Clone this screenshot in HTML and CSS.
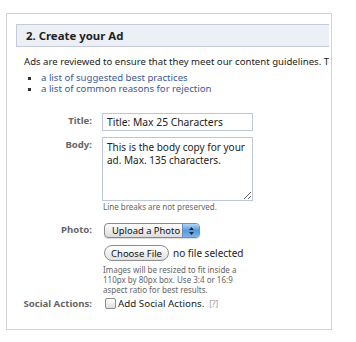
FILE: index.html
```
<!DOCTYPE html>
<html>
 <head>
	 <title>Create your Ad</title>
	 <meta charset="UTF-8"/>
	 <link rel="stylesheet" href="styles.css">
 </head>
 <body>
	<div id="panel">
	<div class="inner">
	<h2 class="step">2. Create your Ad</h2>
	<p class="intro">Ads are reviewed to ensure that they meet our content guidelines. To view examples:</p>
	<ul class="links">
		<li><a href="#">a list of suggested best practices</a></li>
		<li><a href="#">a list of common reasons for rejection</a></li>
	</ul>

	<div class="form">
		<label class="lbl">Title:</label>
		<div class="field"><input class="title" type="text" value="Title: Max 25 Characters"></div>

		<label class="lbl">Body:</label>
		<div class="field">
			<textarea class="body">This is the body copy for your ad. Max. 135 characters.</textarea>
			<div class="note">Line breaks are not preserved.</div>
		</div>

		<label class="lbl photo-lbl">Photo:</label>
		<div class="field photo">
			<div class="select"><span class="sel-text">Upload a Photo</span><span class="sel-arrows"><svg width="7" height="10" viewBox="0 0 7 10"><path d="M3.5 1 L6 4 H1 Z M3.5 9 L6 6 H1 Z" fill="#1d2a3a"/></svg></span></div>
			<div class="file"><button class="choose">Choose File</button><span class="nofile">no file selected</span></div>
			<div class="note help">Images will be resized to fit inside a<br>110px by 80px box. Use 3:4 or 16:9<br>aspect ratio for best results.</div>
		</div>

		<label class="lbl social-lbl">Social Actions:</label>
		<div class="field social"><span class="check"></span><span class="social-text">Add Social Actions.</span><span class="q">[?]</span></div>
	</div>
	</div>
	</div>
 </body>
</html>
```
FILE: styles.css
```
body{
  margin: 0;
  background: #fff;
  font-family: "Noto Sans", "DejaVu Sans", sans-serif;
  color: #333;
}
#panel{
  margin: 13px 0 0 6px;
  border: 1px solid #d3d3d3;
  padding: 10px 2px 0 9px;
  box-sizing: border-box;
  width: 326px;
  height: 317px;
}
.inner{
  overflow: hidden;
  height: 100%;
}
h2.step{
  margin: 0;
  width: 400px;
  height: 23px;
  box-sizing: border-box;
  background: #eceff6;
  border: 1px solid #c5cbdb;
  font-size: 11.4px;
  line-height: 21px;
  padding-left: 9px;
  color: #222;
}
.intro{
  margin: 8px 0 0 8px;
  font-size: 9.6px;
  line-height: 13px;
  white-space: nowrap;
  color: #222;
}
ul.links{
  margin: 4px 0 0 0;
  padding: 0 0 0 25px;
  list-style: square;
  font-size: 9.6px;
  line-height: 11px;
  color: #333;
}
ul.links a{
  color: #3b5998;
  text-decoration: none;
}
.form{
  display: grid;
  grid-template-columns: 76px 1fr;
  column-gap: 10px;
  margin-top: 19px;
}
.lbl{
  text-align: right;
  white-space: nowrap;
  font-size: 9.6px;
  font-weight: bold;
  color: #666;
  line-height: 13px;
  padding-top: 1px;
}
.field{
  margin-bottom: 6px;
}
input.title{
  display: block;
  width: 151px;
  height: 18px;
  box-sizing: border-box;
  border: 1px solid #bdc7d8;
  padding: 0 4px;
  font: 10.3px "Noto Sans", sans-serif;
  color: #222;
}
textarea.body{
  display: block;
  width: 151px;
  height: 64px;
  box-sizing: border-box;
  border: 1px solid #bdc7d8;
  padding: 3px 2px 3px 4px;
  font: 10px/13px "Noto Sans", sans-serif;
  color: #222;
  resize: both;
  margin: 0;
}
.note{
  font-size: 8px;
  color: #666;
  margin: 1px 0 0 1px;
  line-height: 10px;
}
.field.photo{
  margin-bottom: 1px;
}
.select{
  display: flex;
  width: 96px;
  height: 15px;
  box-sizing: border-box;
  margin: 5px 0 0 2px;
  border: 1px solid #8a8a8a;
  border-radius: 4px;
  overflow: hidden;
  background: linear-gradient(#fdfdfd, #dcdcdc);
  box-shadow: 0 1px 1px rgba(0,0,0,0.15);
}
.photo-lbl{
  padding-top: 5px;
}
.sel-text{
  flex: 1;
  font-size: 9.4px;
  line-height: 13px;
  padding-left: 7px;
  color: #111;
  white-space: nowrap;
}
.sel-arrows{
  width: 16px;
  display: flex;
  align-items: center;
  justify-content: center;
  background: linear-gradient(#b3d6f6, #5598de 50%, #78b4ea);
  border-left: 1px solid #6a8fba;
}
.file{
  display: flex;
  align-items: center;
  margin: 7px 0 0 2px;
}
button.choose{
  height: 16px;
  padding: 0 6px;
  border: 1px solid #8c8c8c;
  border-radius: 8px;
  background: linear-gradient(#ffffff, #e1e1e1);
  font: 9.5px "Noto Sans", sans-serif;
  line-height: 13px;
  color: #111;
}
.nofile{
  font-size: 10px;
  margin-left: 4px;
  color: #222;
}
.help{
  margin-top: 4px;
  font-size: 8px;
}
.social-lbl{
  padding-top: 1px;
}
.social{
  display: flex;
  align-items: center;
  margin-left: 3px;
  height: 15px;
}
.check{
  width: 11px;
  height: 11px;
  box-sizing: border-box;
  border: 1px solid #8d8d8d;
  border-radius: 2px;
  background: linear-gradient(#fff, #dedede);
}
.social-text{
  font-size: 9.8px;
  margin-left: 2px;
  color: #222;
}
.q{
  font-size: 8px;
  color: #999;
  margin-left: 5px;
}
```
